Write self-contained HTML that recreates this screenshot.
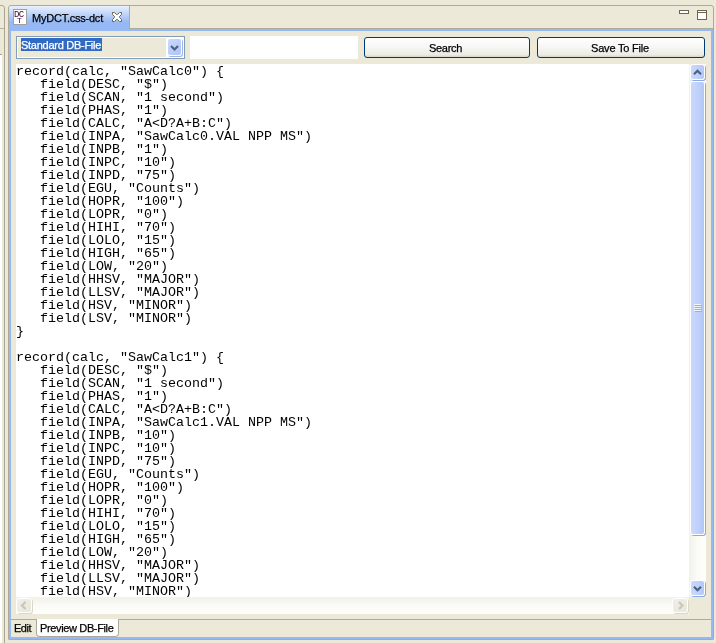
<!DOCTYPE html>
<html>
<head>
<meta charset="utf-8">
<title>MyDCT.css-dct</title>
<style>
html,body{margin:0;padding:0;}
body{width:716px;height:643px;overflow:hidden;background:#ECE9D8;position:relative;
  font-family:"Liberation Sans",sans-serif;font-size:11px;color:#000;}
.abs{position:absolute;box-sizing:border-box;}
.t,.ic,#ta pre{will-change:transform;}
.t{white-space:nowrap;line-height:13px;height:13px;-webkit-text-stroke:0.25px currentColor;}
/* left neighbouring panel sliver */
#lp{left:-10px;top:5px;width:15px;height:660px;border:1px solid #A9A592;border-radius:3px;}
#lp1{left:0;top:28px;width:4px;height:1px;background:#B5B2A2;}
#lp2{left:0;top:54px;width:2px;height:600px;background:#fff;border-top:1px solid #A5A294;}
/* main container */
#frame{left:8px;top:5px;width:706px;height:635px;border:1px solid #ADAA9A;border-radius:3px 3px 1px 1px;}
#tabline{left:9px;top:28px;width:704px;height:1px;background:#ADAA9A;}
#blueT{left:9px;top:29px;width:704px;height:2px;background:#96B8F5;}
#blueL{left:9px;top:29px;width:2px;height:610px;background:#96B8F5;}
#blueR{left:711px;top:29px;width:2px;height:610px;background:#96B8F5;}
#blueB{left:9px;top:637px;width:704px;height:2px;background:#96B8F5;}
#tab{left:9px;top:6px;width:121px;height:23px;border-radius:3px 0 0 0;border-right:1px solid #ADAA9A;
  background:linear-gradient(#EAF0FD 0px,#96B8F5 16px,#96B8F5 23px);}
#tabtxt{left:32px;top:12px;letter-spacing:-0.23px;}
#ico{left:13px;top:9px;width:14px;height:16px;border:1px solid #A0A0A0;background:#fff;}
.ic{font-family:"Liberation Mono",monospace;font-size:9px;line-height:8px;height:8px;color:#400030;letter-spacing:-0.4px;white-space:nowrap;}
#icDC{left:14.1px;top:10.5px;letter-spacing:-0.7px;}
#icT{left:16.6px;top:17.2px;font-size:8px;}
/* combo */
#combo{left:16px;top:36px;width:169px;height:23px;border:1px solid #7F9DB9;background:#ECE9D8;box-shadow:inset 0 0 0 1px #fff;}
#sel{left:21px;top:38px;width:81px;background:#316AC5;color:#fff;letter-spacing:-0.27px;line-height:15px;}
#cbtn{left:167px;top:38px;width:15px;height:18px;border-radius:3px;border:1px solid #fff;
  background:linear-gradient(135deg,#CBD9FC 0%,#BDCEF9 50%,#B0C3F6 100%);box-shadow:1px 1px 0 #9CB3E8;}
#cbg{left:166px;top:37px;width:18px;height:21px;background:#fff;}
#txt{left:190px;top:36px;width:168px;height:23px;background:#fff;}
.btn{top:37px;height:21px;border:1px solid #003C74;border-radius:3px;
  background:linear-gradient(#FFFFFF 0%,#F6F6F2 50%,#ECEBE5 88%,#D8D4C6 100%);}
#b1{left:364px;width:166px;}
#b2{left:537px;width:168px;}
#b1t{left:428.8px;top:42px;letter-spacing:-0.3px;}
#b2t{left:591px;top:42px;letter-spacing:-0.19px;}
/* text area */
#ta{left:16px;top:64px;width:673px;height:533px;background:#fff;overflow:hidden;}
#ta pre{margin:0;position:absolute;left:-0.1px;top:1px;font-family:"Liberation Mono",monospace;font-size:13.33px;line-height:13px;color:#000;}
/* scrollbars */
#vs{left:689px;top:64px;width:17px;height:533px;background:linear-gradient(90deg,#F2F0EA 0%,#FAFAF6 45%,#FEFEFC 100%);}
#hs{left:16px;top:597px;width:673px;height:17px;background:linear-gradient(#F2F0EA 0%,#FAFAF6 45%,#FEFEFC 100%);}
.sb{border:1px solid #fff;border-radius:3px;background:linear-gradient(90deg,#C9D8FC 0%,#C1D2FA 50%,#B2C6F7 100%);box-shadow:1px 1px 0 #8CA9E2;}
.sbd{border:1px solid #fff;border-radius:3px;background:linear-gradient(135deg,#F0EFE6,#E9E7DB);box-shadow:1px 1px 0 #DAD7C8;}
#up{left:690px;top:64px;width:15px;height:16px;}
#dn{left:690px;top:580px;width:15px;height:16px;}
#thumb{left:690px;top:81px;width:15px;height:454px;}
#hl{left:16px;top:598px;width:16px;height:15px;}
#hr{left:672px;top:598px;width:16px;height:15px;}
/* bottom tabs */
#btline{left:11px;top:619px;width:700px;height:1px;background:#ADAA9A;}
#bt2{left:36px;top:619px;width:83px;height:18px;background:#fff;border-left:1px solid #ADAA9A;border-right:1px solid #ADAA9A;border-bottom:1px solid #ADAA9A;border-radius:0 0 4px 4px;}
#bt1t{left:13.5px;top:622px;letter-spacing:-0.5px;}
#bt2t{left:39.5px;top:622px;letter-spacing:-0.36px;}
svg{position:absolute;left:0;top:0;overflow:visible;}
</style>
</head>
<body>
<div class="abs" id="lp"></div>
<div class="abs" id="lp1"></div>
<div class="abs" id="lp2"></div>

<div class="abs" id="frame"></div>
<div class="abs" id="tabline"></div>
<div class="abs" id="tab"></div>
<div class="abs" id="blueT"></div>
<div class="abs" id="blueL"></div>
<div class="abs" id="blueR"></div>
<div class="abs" id="blueB"></div>
<div class="abs" id="ico"></div>
<div class="abs ic" id="icDC">DC</div>
<div class="abs ic" id="icT">T</div>
<div class="abs t" id="tabtxt">MyDCT.css-dct</div>

<div class="abs" id="combo"></div>
<div class="abs t" id="sel">Standard DB-File</div>
<div class="abs" id="cbg"></div>
<div class="abs" id="cbtn"></div>
<div class="abs" id="txt"></div>
<div class="abs btn" id="b1"></div>
<div class="abs t" id="b1t">Search</div>
<div class="abs btn" id="b2"></div>
<div class="abs t" id="b2t">Save To File</div>

<div class="abs" id="ta"><pre>record(calc, "SawCalc0") {
   field(DESC, "$")
   field(SCAN, "1 second")
   field(PHAS, "1")
   field(CALC, "A&lt;D?A+B:C")
   field(INPA, "SawCalc0.VAL NPP MS")
   field(INPB, "1")
   field(INPC, "10")
   field(INPD, "75")
   field(EGU, "Counts")
   field(HOPR, "100")
   field(LOPR, "0")
   field(HIHI, "70")
   field(LOLO, "15")
   field(HIGH, "65")
   field(LOW, "20")
   field(HHSV, "MAJOR")
   field(LLSV, "MAJOR")
   field(HSV, "MINOR")
   field(LSV, "MINOR")
}

record(calc, "SawCalc1") {
   field(DESC, "$")
   field(SCAN, "1 second")
   field(PHAS, "1")
   field(CALC, "A&lt;D?A+B:C")
   field(INPA, "SawCalc1.VAL NPP MS")
   field(INPB, "10")
   field(INPC, "10")
   field(INPD, "75")
   field(EGU, "Counts")
   field(HOPR, "100")
   field(LOPR, "0")
   field(HIHI, "70")
   field(LOLO, "15")
   field(HIGH, "65")
   field(LOW, "20")
   field(HHSV, "MAJOR")
   field(LLSV, "MAJOR")
   field(HSV, "MINOR")
   field(LSV, "MINOR")
}</pre></div>

<div class="abs" id="vs"></div>
<div class="abs" id="hs"></div>
<div class="abs sb" id="up"></div>
<div class="abs sb" id="thumb"></div>
<div class="abs sb" id="dn"></div>
<div class="abs sbd" id="hl"></div>
<div class="abs sbd" id="hr"></div>

<svg width="716" height="643" viewBox="0 0 716 643">
<!-- tab close X -->
<polygon transform="translate(112.5,12.5)" points="0,0 2,0 4,2 5,2 7,0 9,0 9,2 7,4 7,5 9,7 9,9 7,9 5,7 4,7 2,9 0,9 0,7 2,5 2,4 0,2" fill="#fff" stroke="#6B6651" stroke-width="1" stroke-linejoin="miter"/>
<!-- minimize / maximize -->
<rect x="679.5" y="10.5" width="9" height="3" fill="#fff" stroke="#6B6651"/>
<rect x="697.5" y="10.5" width="9" height="9" fill="#fff" stroke="#6B6651"/>
<line x1="697" y1="12.5" x2="707" y2="12.5" stroke="#6B6651"/>
<!-- combo arrow -->
<polyline points="171,46 174.5,49.5 178,46" fill="none" stroke="#4D6185" stroke-width="2.2"/>
<!-- scroll arrows -->
<polyline points="694,74.2 697.5,70.7 701,74.2" fill="none" stroke="#4D6185" stroke-width="2.2"/>
<polyline points="694,586.7 697.5,590.2 701,586.7" fill="none" stroke="#4D6185" stroke-width="2.2"/>
<polyline points="25.5,602 22,605.5 25.5,609" fill="none" stroke="#C9C7BA" stroke-width="2.2"/>
<polyline points="679,602 682.5,605.5 679,609" fill="none" stroke="#C9C7BA" stroke-width="2.2"/>
<!-- thumb grip -->
<g stroke-width="1">
<path d="M694 304.5h7M694 306.5h7M694 308.5h7M694 310.5h7" stroke="#EEF4FE"/>
<path d="M695 305.5h7M695 307.5h7M695 309.5h7M695 311.5h7" stroke="#8CB0F8"/>
</g>
</svg>
<div class="abs" id="btline"></div>
<div class="abs" id="bt2"></div>
<div class="abs t" id="bt1t">Edit</div>
<div class="abs t" id="bt2t">Preview DB-File</div>
</body>
</html>
